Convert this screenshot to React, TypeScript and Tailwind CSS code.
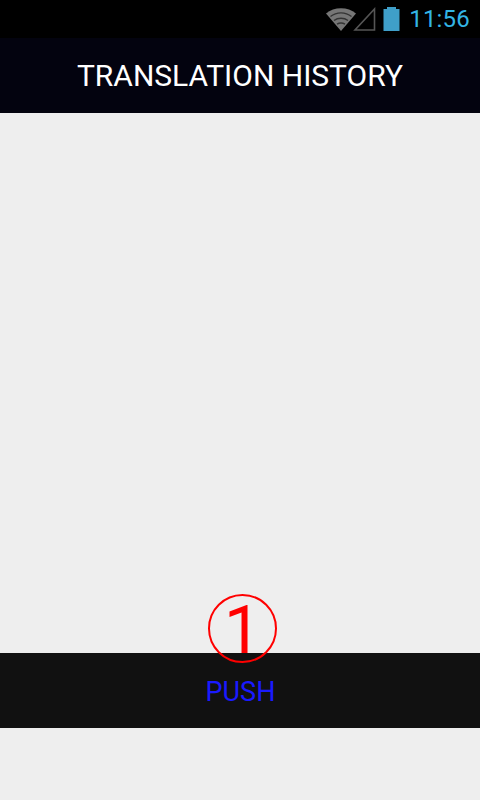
export default function App() {
  return (
    <div className="flex h-[800px] w-[480px] flex-col bg-[#eeeeee] font-['Roboto',sans-serif]">
      {/* Status bar */}
      <div className="flex h-[38px] items-center justify-end bg-black pr-[10px]">
        <svg width="30" height="24" viewBox="0 0 30 24" className="mt-[1px]">
          <path d="M0 5.5 C8 -1.5 22 -1.5 30 5.5 L15 23 Z" fill="#767676" />
          <path d="M4.5 8.5 C10.5 3.6 19.5 3.6 25.5 8.5 M8 12.5 C12 9.4 18 9.4 22 12.5 M11 16.2 C13.5 14.6 16.5 14.6 19 16.2" fill="none" stroke="#333333" strokeWidth="1.4" />
        </svg>
        <svg width="23" height="24" viewBox="0 0 23 24" className="ml-[-3px]">
          <path d="M21.5 2 V23 H2 Z" fill="none" stroke="#555555" strokeWidth="1.6" />
        </svg>
        <svg width="17" height="24" viewBox="0 0 17 24" className="ml-[7px]">
          <path d="M4 0 H13 V2 H16.5 V24 H0.5 V2 H4 Z" fill="#3f9fc9" />
        </svg>
        <span className="ml-[9px] text-[24px] leading-none tracking-[0.2px] text-[#33b5e5]">11:56</span>
      </div>

      {/* Title */}
      <div className="flex h-[75px] items-center justify-center bg-[#03030f] pt-[1px]">
        <h1 className="text-[30px] leading-none font-normal text-white">TRANSLATION HISTORY</h1>
      </div>

      <div className="flex-1" />

      {/* Bottom button */}
      <div className="relative mb-[72px] flex h-[75px] items-center justify-center bg-[#111111] pt-[3px] pl-[1px]">
        <span className="text-[27px] leading-none font-normal text-[#1a1aff]">PUSH</span>
        <span className="absolute top-[-59px] left-[208px] flex h-[69px] w-[69px] items-center justify-center rounded-full border-2 border-[#ff0000] pt-[4px] text-[66px] leading-none font-normal text-[#ff0000]">1</span>
      </div>
    </div>
  );
}
